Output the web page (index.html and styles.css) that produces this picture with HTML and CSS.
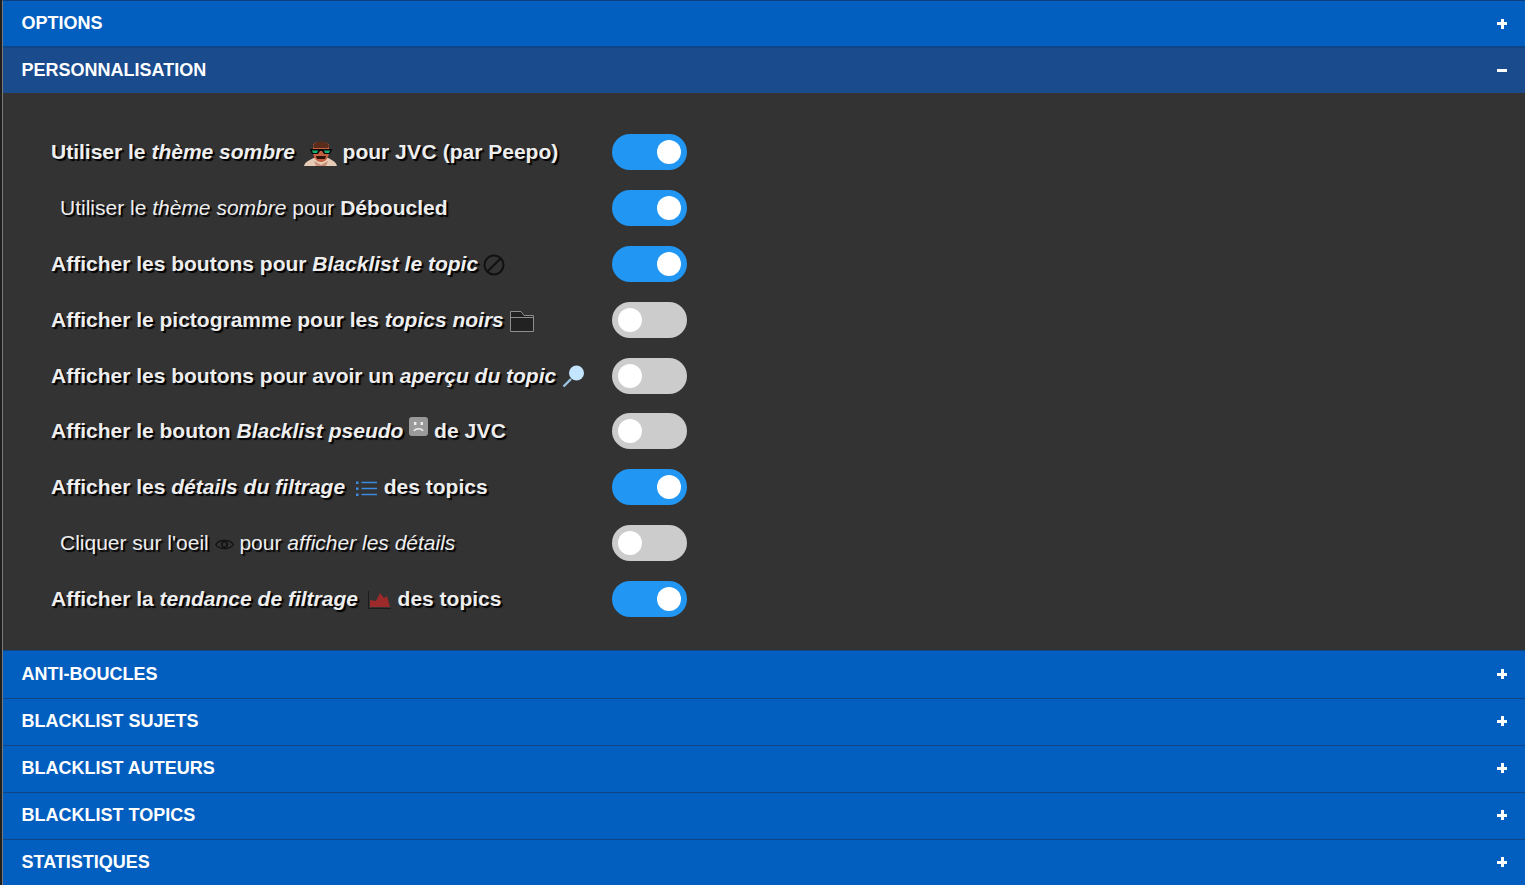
FILE: index.html
```html
<!DOCTYPE html>
<html lang="fr">
<head>
  <meta charset="UTF-8" />
  <title>Options</title>
  <link rel="stylesheet" href="styles.css">
</head>
<body>
  <div class="backdrop"></div>
  <main class="accordion">
    <div class="acc-header top"><span>OPTIONS</span><span class="acc-sign plus"></span></div>
    <div class="acc-header top active"><span>PERSONNALISATION</span><span class="acc-sign minus"></span></div>

    <div class="acc-body">
      <div class="option-row">
        <div class="option-label strong">Utiliser le <i>thème sombre</i> <svg class="ico ico-peepo" viewBox="0 0 33 25">
            <path d="M0 25 C1 20 8 18 12 16 L22 16 C26 18 32 20 33 25 Z" fill="#e6cbb6"/>
            <path d="M10 20 L17 24 L24 20 L22 25 L12 25 Z" fill="#c98f78"/>
            <path d="M9 4 C10 0 23 0 25 4 L25 12 C24 19 20 21 17 21 C13 21 10 18 9 12 Z" fill="#c4603f"/>
            <path d="M9 5 C11 -1 23 -1 25 5 L24 7 L10 7 Z" fill="#5a2c1c"/>
            <path d="M6 8 H28 V9 L26 13 H20 L18 10 H16 L14 13 H8 L6 9 Z" fill="#0b0b0b"/>
            <path d="M8 9.500 H14 L13 12 H9 Z M20 9.500 H26 L25 12 H21 Z" fill="#18b070"/>
            <path d="M12 15 L22 15 L21 18 L13 18 Z" fill="#2e130b"/>
          </svg> pour <b class="wide">JVC</b> (par Peepo)</div>
        <div class="toggle on"></div>
      </div>

      <div class="option-row">
        <div class="option-label sub">Utiliser le <i>thème sombre</i> pour <b>Déboucled</b></div>
        <div class="toggle on"></div>
      </div>

      <div class="option-row">
        <div class="option-label strong">Afficher les boutons pour <i>Blacklist le topic</i> <svg class="ico ico-ban" viewBox="0 0 22 22">
            <circle cx="11" cy="11" r="9.5" fill="none" stroke="#111" stroke-width="2"/>
            <path d="M4.5 17.5 L17.5 4.5" stroke="#111" stroke-width="2"/>
          </svg></div>
        <div class="toggle on"></div>
      </div>

      <div class="option-row">
        <div class="option-label strong">Afficher le pictogramme pour les <i>topics noirs</i> <svg class="ico ico-folder" viewBox="0 0 24 21">
            <path d="M.5 20.5 V.5 H11 L14 4.5 H23.5 V20.5 Z" fill="#222" stroke="#8e8e8e"/>
            <path d="M.5 6.5 H23.5" stroke="#8e8e8e"/>
          </svg></div>
        <div class="toggle off"></div>
      </div>

      <div class="option-row">
        <div class="option-label strong">Afficher les boutons pour avoir un <i>aperçu du topic</i> <svg class="ico ico-glass" viewBox="0 0 23 23">
            <circle cx="14.5" cy="8" r="7.5" fill="#c3e5fd"/>
            <path d="M9 14 L1.5 21.5" stroke="#9cc4e0" stroke-width="2.4"/>
          </svg></div>
        <div class="toggle off"></div>
      </div>

      <div class="option-row">
        <div class="option-label strong">Afficher le bouton <i>Blacklist pseudo</i> <svg class="ico ico-sad" viewBox="0 0 19 19">
            <rect width="19" height="19" rx="3" fill="#9a9a9a"/>
            <rect x="5" y="5" width="2.4" height="3" fill="#eee"/>
            <rect x="11.6" y="5" width="2.4" height="3" fill="#eee"/>
            <path d="M5 14 C6.500 11 12.500 11 14 14" fill="none" stroke="#eee" stroke-width="1.500"/>
          </svg> de <b class="wide">JVC</b></div>
        <div class="toggle off"></div>
      </div>

      <div class="option-row">
        <div class="option-label strong">Afficher les <i>détails du filtrage</i> <svg class="ico ico-list" viewBox="0 0 21 15">
            <path d="M5.500 1.500 H21 M5.500 7.500 H21 M5.500 13.500 H21" stroke="#3d8be0" stroke-width="1.500"/>
            <path d="M0 .5 H2.500 V3 H0 Z M0 6.500 H2.500 V9 H0 Z M0 12.500 H2.500 V15 H0 Z" fill="#3d8be0"/>
          </svg> des topics</div>
        <div class="toggle on"></div>
      </div>

      <div class="option-row">
        <div class="option-label sub">Cliquer sur l'oeil <svg class="ico ico-eye" viewBox="0 0 19 13">
            <path d="M.8 6.500 C4 1 15 1 18.200 6.500 C15 12 4 12 .8 6.500 Z" fill="none" stroke="#111" stroke-width="1.300"/>
            <circle cx="9.500" cy="6.500" r="2.700" fill="none" stroke="#111" stroke-width="1.500"/>
          </svg> pour <i>afficher les détails</i></div>
        <div class="toggle off"></div>
      </div>

      <div class="option-row">
        <div class="option-label strong">Afficher la <i>tendance de filtrage</i> <svg class="ico ico-trend" viewBox="0 0 23 18">
            <path d="M2 16 L2 9 L8 10 L12 2 L16 7 L19 5 L22 16 Z" fill="#9c2a2a"/>
            <path d="M.5 0 V17.500 H23" fill="none" stroke="#1c1c1c"/>
          </svg> des topics</div>
        <div class="toggle on"></div>
      </div>
    </div>

    <div class="acc-header first-after"><span>ANTI-BOUCLES</span><span class="acc-sign plus"></span></div>
    <div class="acc-header"><span>BLACKLIST SUJETS</span><span class="acc-sign plus"></span></div>
    <div class="acc-header"><span>BLACKLIST AUTEURS</span><span class="acc-sign plus"></span></div>
    <div class="acc-header"><span>BLACKLIST TOPICS</span><span class="acc-sign plus"></span></div>
    <div class="acc-header"><span>STATISTIQUES</span><span class="acc-sign plus"></span></div>
  </main>
</body>
</html>
```

FILE: styles.css
```css
html, body {
  margin: 0;
  padding: 0;
  height: 885px;
  overflow: hidden;
  background-color: #222;
}

body {
  display: flex;
  font-family: "Liberation Sans", Arial, sans-serif;
}

.backdrop {
  width: 2px;
  flex: none;
  background-color: #1e1e1e;
}

.accordion {
  flex: 1;
  min-width: 0;
  border-left: 1px solid #7a7a7a;
  border-top: 1px solid #0c3f7f;
  background-color: #333;
}

.acc-header {
  display: flex;
  justify-content: space-between;
  align-items: center;
  height: 44px;
  padding: 0 18px 2px 18.5px;
  border-bottom: 1px solid #0f4585;
  background-color: #025fc0;
  color: white;
  font-size: 18px;
  font-weight: bold;
}

.acc-header.top {
  height: 45px;
  padding-bottom: 0;
  border-bottom: 2px solid #0f4585;
}

.acc-header.active {
  background-color: #194b8d;
  border-bottom: none;
}

.acc-header.first-after {
  height: 46px;
  padding-bottom: 1px;
}

.acc-sign {
  position: relative;
  width: 10px;
  height: 10px;
}

.acc-sign::before,
.acc-sign::after {
  content: "";
  position: absolute;
  background-color: white;
}

.acc-sign::before {
  left: 0;
  top: 3.500px;
  width: 10px;
  height: 3px;
}

.plus::after {
  left: 3.500px;
  top: 0;
  width: 3px;
  height: 10px;
}

.minus::after {
  display: none;
}

.acc-body {
  height: 516px;
  padding-top: 41px;
  padding-left: 48px;
  border-bottom: 1px solid #0f4585;
}

.option-row {
  display: grid;
  grid-template-columns: 561px 75px;
  align-items: start;
  height: 55.875px;
}

.option-label {
  height: 36px;
  line-height: 36px;
  white-space: nowrap;
  color: #eee;
  font-size: 21px;
  text-shadow: 2px 2px 1px #000;
}

.option-label.strong {
  font-weight: bold;
}

.option-label.sub {
  padding-left: 9px;
}

.option-label b.wide {
  letter-spacing: 0.3px;
}

.ico {
  vertical-align: middle;
}

.ico-peepo { width: 33px; height: 25px; margin-left: 3px; }
.ico-ban { width: 22px; height: 22px; margin-left: -1px; }
.ico-folder { width: 24px; height: 21px; }
.ico-glass { width: 23px; height: 23px; }
.ico-sad { width: 19px; height: 19px; vertical-align: 2px; }
.ico-list { width: 21px; height: 15px; margin-left: 5px; margin-right: 1px; }
.ico-eye { width: 19px; height: 13px; }
.ico-trend { width: 23px; height: 18px; margin-left: 4px; margin-right: 1px; }

.toggle {
  position: relative;
  width: 75px;
  height: 36px;
  border-radius: 18px;
}

.toggle::after {
  content: "";
  position: absolute;
  top: 6px;
  width: 24px;
  height: 24px;
  border-radius: 50%;
  background-color: white;
}

.toggle.on {
  background-color: #2196f3;
}

.toggle.on::after {
  right: 6px;
}

.toggle.off {
  background-color: #ccc;
}

.toggle.off::after {
  left: 6px;
}
```
